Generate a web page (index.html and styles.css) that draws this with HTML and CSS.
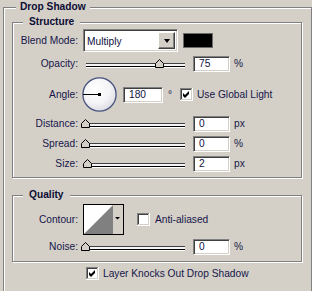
FILE: index.html
```html
<!DOCTYPE html>
<html lang="en">
<head>
  <meta charset="UTF-8">
  <title>Drop Shadow</title>
  <link rel="stylesheet" href="styles.css">
</head>
<body>

  <fieldset class="panel">
    <legend>Drop Shadow</legend>

    <fieldset class="group">
      <legend>Structure</legend>

      <div class="row row-blend">
        <span class="lbl">Blend Mode:</span>
        <div class="select">
          <span class="select-text">Multiply</span>
          <span class="select-btn"><i class="arrow"></i></span>
        </div>
        <div class="swatch"></div>
      </div>

      <div class="row row-slide">
        <span class="lbl">Opacity:</span>
        <div class="slider">
          <div class="track"></div>
          <svg class="thumb" style="left: 74px" width="9" height="9" viewBox="0 0 9 9"><polygon points="0.5,4.5 4.5,0.5 8.5,4.5 8.5,8.5 0.5,8.5" fill="#d4d0c8" stroke="#000"/></svg>
        </div>
        <div class="field">75</div>
        <span class="unit">%</span>
      </div>

      <div class="row row-angle">
        <span class="lbl">Angle:</span>
        <svg class="dial" width="35" height="35" viewBox="0 0 35 35">
          <defs>
            <radialGradient id="dialFill" cx="40%" cy="35%" r="70%">
              <stop offset="0" stop-color="#ffffff"/>
              <stop offset="0.6" stop-color="#f4f4f6"/>
              <stop offset="1" stop-color="#d8d8e0"/>
            </radialGradient>
          </defs>
          <circle cx="17.5" cy="17.5" r="16.6" fill="url(#dialFill)" stroke="#46527e" stroke-width="1.3"/>
          <rect x="1" y="17" width="17" height="1" fill="#000"/>
          <rect x="16" y="16" width="3" height="3" fill="#000"/>
        </svg>
        <div class="field field-angle">180</div>
        <span class="deg">°</span>
        <svg class="check" width="13" height="13" viewBox="0 0 13 13">
          <rect width="13" height="13" fill="#fff"/>
          <rect width="12" height="1" fill="#808080"/>
          <rect width="1" height="12" fill="#808080"/>
          <rect x="1" y="1" width="11" height="11" fill="#d4d0c8"/>
          <rect x="1" y="1" width="10" height="1" fill="#404040"/>
          <rect x="1" y="1" width="1" height="10" fill="#404040"/>
          <rect x="2" y="2" width="9" height="9" fill="#fff"/>
          <polygon points="3,5 5,7 9,3 9,6 5,10 3,8" fill="#000"/>
        </svg>
        <span class="check-text">Use Global Light</span>
      </div>

      <div class="row row-slide">
        <span class="lbl">Distance:</span>
        <div class="slider">
          <div class="track"></div>
          <svg class="thumb" style="left: 0px" width="9" height="9" viewBox="0 0 9 9"><polygon points="0.5,4.5 4.5,0.5 8.5,4.5 8.5,8.5 0.5,8.5" fill="#d4d0c8" stroke="#000"/></svg>
        </div>
        <div class="field">0</div>
        <span class="unit">px</span>
      </div>

      <div class="row row-slide">
        <span class="lbl">Spread:</span>
        <div class="slider">
          <div class="track"></div>
          <svg class="thumb" style="left: 0px" width="9" height="9" viewBox="0 0 9 9"><polygon points="0.5,4.5 4.5,0.5 8.5,4.5 8.5,8.5 0.5,8.5" fill="#d4d0c8" stroke="#000"/></svg>
        </div>
        <div class="field">0</div>
        <span class="unit">%</span>
      </div>

      <div class="row row-slide">
        <span class="lbl">Size:</span>
        <div class="slider">
          <div class="track"></div>
          <svg class="thumb" style="left: 2px" width="9" height="9" viewBox="0 0 9 9"><polygon points="0.5,4.5 4.5,0.5 8.5,4.5 8.5,8.5 0.5,8.5" fill="#d4d0c8" stroke="#000"/></svg>
        </div>
        <div class="field">2</div>
        <span class="unit">px</span>
      </div>
    </fieldset>

    <fieldset class="group quality">
      <legend>Quality</legend>

      <div class="row row-contour">
        <span class="lbl">Contour:</span>
        <svg class="contour" width="41" height="31" viewBox="0 0 41 31">
          <rect width="41" height="31" fill="#000"/>
          <rect x="1" y="1" width="29" height="29" fill="#fff"/>
          <polygon points="1,30 30,1 30,30" fill="#808080"/>
          <rect x="30" y="1" width="10" height="29" fill="#d4d0c8"/>
          <polygon points="32,13 37,13 34.5,15.5" fill="#000"/>
        </svg>
        <svg class="check check-aa" width="13" height="13" viewBox="0 0 13 13">
          <rect width="13" height="13" fill="#fff"/>
          <rect width="12" height="1" fill="#808080"/>
          <rect width="1" height="12" fill="#808080"/>
          <rect x="1" y="1" width="11" height="11" fill="#d4d0c8"/>
          <rect x="1" y="1" width="10" height="1" fill="#404040"/>
          <rect x="1" y="1" width="1" height="10" fill="#404040"/>
          <rect x="2" y="2" width="9" height="9" fill="#fff"/>
        </svg>
        <span class="check-text check-text-aa">Anti-aliased</span>
      </div>

      <div class="row row-slide">
        <span class="lbl">Noise:</span>
        <div class="slider">
          <div class="track"></div>
          <svg class="thumb" style="left: 0px" width="9" height="9" viewBox="0 0 9 9"><polygon points="0.5,4.5 4.5,0.5 8.5,4.5 8.5,8.5 0.5,8.5" fill="#d4d0c8" stroke="#000"/></svg>
        </div>
        <div class="field">0</div>
        <span class="unit">%</span>
      </div>
    </fieldset>

    <div class="row row-knock">
      <svg class="check" width="13" height="13" viewBox="0 0 13 13">
        <rect width="13" height="13" fill="#fff"/>
        <rect width="12" height="1" fill="#808080"/>
        <rect width="1" height="12" fill="#808080"/>
        <rect x="1" y="1" width="11" height="11" fill="#d4d0c8"/>
        <rect x="1" y="1" width="10" height="1" fill="#404040"/>
        <rect x="1" y="1" width="1" height="10" fill="#404040"/>
        <rect x="2" y="2" width="9" height="9" fill="#fff"/>
        <polygon points="3,5 5,7 9,3 9,6 5,10 3,8" fill="#000"/>
      </svg>
      <span class="check-text">Layer Knocks Out Drop Shadow</span>
    </div>
  </fieldset>

</body>
</html>
```

FILE: styles.css
```css
  * {
    box-sizing: border-box;
  }
  html, body {
    overflow: hidden;
  }
  body {
    margin: 0;
    background-color: #d4d0c8;
    font-family: 'Liberation Sans', Arial, sans-serif;
    font-size: 10.2px;
    line-height: 12px;
    color: #16164a;
  }

  /* etched frames */
  .panel, .group {
    margin: 0;
    border: 1px solid #808080;
    box-shadow: inset 1px 1px #fff, 1px 1px #fff;
    min-width: 0;
  }
  .panel {
    margin-left: 3px;
    padding: 1px 9px 20px 8px;
  }
  .group {
    padding: 0 0 5px 0;
  }
  .quality {
    margin-top: 10px;
    padding-bottom: 6px;
  }
  legend {
    font-weight: bold;
    line-height: 14px;
    background-color: #d4d0c8;
    color: #0c0c34;
  }
  .panel > legend {
    margin-left: 4px;
    padding: 0 4px;
  }
  .group > legend {
    margin-left: 10px;
    padding: 0 6px;
  }

  /* rows */
  .row {
    display: flex;
    align-items: center;
  }
  .row-blend {
    height: 23px;
  }
  .row-slide {
    height: 16px;
    margin-top: 4px;
  }
  .row-angle {
    height: 35px;
    margin-top: 5px;
  }
  .row-contour {
    height: 31px;
    margin-top: 2px;
  }
  .row-knock {
    height: 13px;
    margin-top: 5px;
    margin-left: 74px;
  }
  .lbl {
    width: 65px;
    text-align: right;
    flex-shrink: 0;
  }

  /* inset boxes */
  .select, .field {
    border: 1px solid;
    border-color: #808080 #fff #fff #808080;
    box-shadow: inset 1px 1px #404040, inset -1px -1px #d4d0c8;
    background-color: #fff;
  }
  .select {
    display: flex;
    width: 95px;
    height: 23px;
    margin-left: 5px;
    padding: 2px;
  }
  .select-text {
    flex: 1;
    padding-left: 1px;
    line-height: 19px;
    color: #101040;
  }
  .select-btn {
    width: 17px;
    display: flex;
    align-items: center;
    justify-content: center;
    background-color: #d4d0c8;
    border: 1px solid;
    border-color: #fff #404040 #404040 #fff;
    box-shadow: inset -1px -1px #808080;
  }
  .arrow {
    width: 0;
    height: 0;
    border-left: 3.5px solid transparent;
    border-right: 3.5px solid transparent;
    border-top: 4px solid #000;
  }
  .swatch {
    width: 30px;
    height: 15px;
    margin-left: 5px;
    background-color: #000;
    border: 1px solid #6a6a6a;
  }
  .field {
    width: 37px;
    height: 16px;
    margin-left: 3px;
    padding-left: 5px;
    line-height: 14px;
    color: #101040;
  }
  .unit {
    margin-left: 4px;
  }

  /* sliders */
  .slider {
    position: relative;
    width: 109px;
    height: 16px;
    margin-left: 3px;
  }
  .track {
    margin: 7px 5px 0;
    height: 4px;
    border-top: 1px solid #404040;
    border-bottom: 1px solid #000;
    background-color: #f4f4f4;
    box-shadow: 0 1px #fff;
  }
  .thumb {
    position: absolute;
    top: 3px;
    display: block;
  }

  /* angle */
  .dial {
    margin-left: 4px;
    display: block;
  }
  .field-angle {
    width: 40px;
    margin-left: 6px;
  }
  .deg {
    width: 12px;
    margin-left: 5px;
  }
  .check {
    display: block;
    flex-shrink: 0;
  }
  .check-text {
    margin-left: 4px;
    white-space: nowrap;
  }

  /* quality */
  .contour {
    margin-left: 5px;
    display: block;
  }
  .check-aa {
    margin-left: 13px;
  }
  .check-text-aa {
    margin-left: 5px;
  }
```
